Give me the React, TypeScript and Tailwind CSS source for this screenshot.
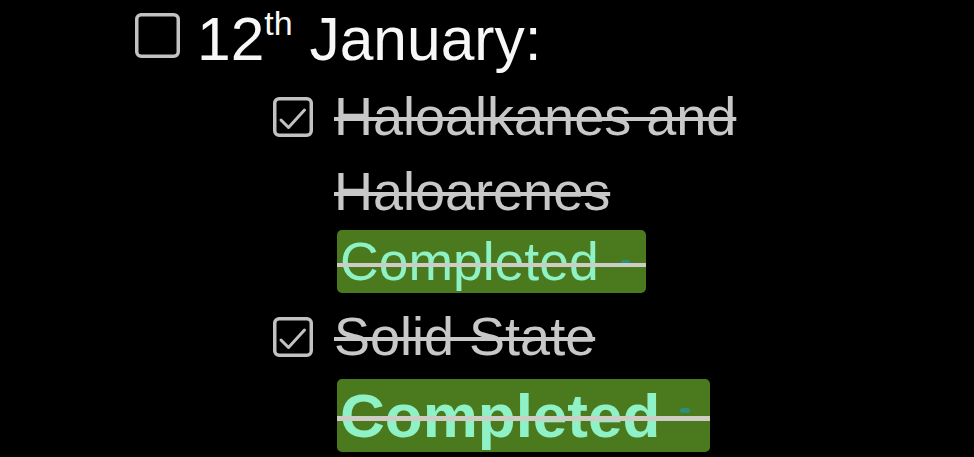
function Box(props: { size: number; checked?: boolean }) {
  const s = props.size;
  return (
    <svg width={s} height={s} viewBox={`0 0 ${s} ${s}`} className="shrink-0">
      <rect
        x={1.75}
        y={1.75}
        width={s - 3.5}
        height={s - 3.5}
        rx={4.5}
        fill="none"
        stroke="#c2c2c2"
        strokeWidth={3.5}
      />
      {props.checked && (
        <polyline
          points="8,23 15.5,30.5 31.5,13"
          fill="none"
          stroke="#c2c2c2"
          strokeWidth={3}
          strokeLinecap="round"
          strokeLinejoin="round"
        />
      )}
    </svg>
  );
}

function Badge(props: { bold?: boolean }) {
  const big = props.bold;
  return (
    <div
      className={
        big
          ? "relative ml-[3px] mt-[5px] h-[73px] w-[373px] rounded-[5px] bg-[#4a7a1d] pl-[3px] text-[62px] font-bold leading-[73px] text-[#8ff2c6]"
          : "relative ml-[3px] mt-[1px] h-[63px] w-[309px] rounded-[5px] bg-[#4a7a1d] pl-[3px] text-[53.5px] leading-[63px] text-[#8ff2c6]"
      }
    >
      Completed
      <span
        className={
          big
            ? "absolute left-[343px] top-[29px] h-[5px] w-[10px] rounded-full bg-[#2b8f80]"
            : "absolute left-[284px] top-[30px] h-[4px] w-[9px] rounded-full bg-[#2b8f80]"
        }
      />
      <span
        className={
          big
            ? "absolute left-0 right-0 top-[37px] h-[5px] bg-[#cdcdc6]"
            : "absolute left-0 right-0 top-[33px] h-[4px] bg-[#cdcdc6]"
        }
      />
    </div>
  );
}

export default function App() {
  return (
    <div className="h-[457px] w-[974px] overflow-hidden bg-black font-['Liberation_Sans',Arial,sans-serif]">
      <div className="flex pl-[135px] pt-[4px] pb-[5px]">
        <div className="mt-[9px]">
          <Box size={45} />
        </div>
        <p className="ml-[17px] text-[60.5px] leading-[70px] text-[#f7f7f7]">
          12
          <span className="inline-block align-[25px] text-[34px] leading-none">th</span>{" "}
          January:
        </p>
      </div>

      <div className="flex pl-[273px]">
        <div className="mt-[18px]">
          <Box size={40} checked />
        </div>
        <div className="ml-[21px]">
          <p className="w-[420px] text-[54px] leading-[75px] text-[#c8c8c8] line-through decoration-[#c8c8c8] decoration-[4px]">
            Haloalkanes and Haloarenes
          </p>
          <Badge />
        </div>
      </div>

      <div className="mt-[6px] flex pl-[273px]">
        <div className="mt-[18px]">
          <Box size={40} checked />
        </div>
        <div className="ml-[21px]">
          <p className="text-[54px] leading-[75px] text-[#c8c8c8] line-through decoration-[#c8c8c8] decoration-[4px]">
            Solid State
          </p>
          <Badge bold />
        </div>
      </div>
    </div>
  );
}
